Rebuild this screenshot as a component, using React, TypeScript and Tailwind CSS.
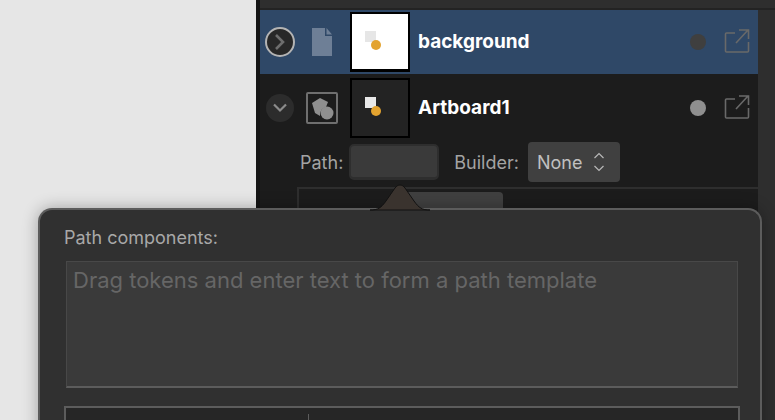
const ui = "font-['Inter','Liberation_Sans',sans-serif]";

function Thumb({ dark }: { dark?: boolean }) {
  return (
    <div className={`w-[60px] h-[60px] shrink-0 border-2 border-black ${dark ? 'bg-[#232323]' : 'bg-white border-b-[3px]'} flex items-center justify-center`}>
      <svg width="56" height="56" viewBox="0 0 56 56">
        <rect x="13" y="17" width="11" height="11" fill={dark ? '#e8e8e8' : '#e6e6e6'} />
        <circle cx="24" cy="31" r="5" fill="#e3a32f" />
      </svg>
    </div>
  );
}

function ShareIcon() {
  return (
    <svg width="26" height="26" viewBox="0 0 26 26" fill="none" stroke="#696969" strokeWidth="1.6" className="shrink-0">
      <path d="M11 5H2.5a1 1 0 0 0-1 1v17a1 1 0 0 0 1 1h21a1 1 0 0 0 1-1v-9" />
      <path d="M12 15 24 2M15 2h9.5v9" />
    </svg>
  );
}

export default function App() {
  return (
    <div className={`w-[775px] h-[420px] relative overflow-hidden flex bg-[#e6e6e6] ${ui}`}>
      <div className="w-[256px] shrink-0" />
      <div className="flex-1 flex flex-col bg-[#2e2e2e] border-l-4 border-[#141414]">
        <div className="h-[10px] shrink-0 border-b-2 border-[#232323]" />
        <div className="w-[498px] flex-1 flex flex-col bg-[#1c1c1c]">
          {/* Layer rows */}
          <div className="h-[64px] flex items-center bg-[#2f4867]">
            <div className="ml-[5px] w-[30px] h-[30px] rounded-full bg-[#282828] border-2 border-[#b4b4b4] flex items-center justify-center">
              <svg width="14" height="18" viewBox="0 0 14 18" fill="none" stroke="#6e6e6e" strokeWidth="2.6"><path d="M3 2l7 7-7 7" /></svg>
            </div>
            <svg width="20" height="28" viewBox="0 0 20 28" className="ml-[17px]" fill="#6e7f96">
              <path d="M0 0h13v8h7v20H0z" />
              <path d="M14.500 0 20 6.500h-5.500z" />
            </svg>
            <div className="ml-[18px]"><Thumb /></div>
            <span className="ml-[8px] text-[19px] font-bold text-white">background</span>
            <div className="ml-auto w-[16px] h-[16px] rounded-full bg-[#3f3f3f]" />
            <div className="ml-[18px] mr-[8px] -mt-[3px]"><ShareIcon /></div>
          </div>
          <div className="h-[68px] flex items-center">
            <div className="ml-[6px] w-[28px] h-[28px] rounded-full bg-[#2c2c2c] flex items-center justify-center">
              <svg width="16" height="10" viewBox="0 0 16 10" fill="none" stroke="#8b8b8b" strokeWidth="2.2"><path d="M2 1.500l6 6 6-6" /></svg>
            </div>
            <div className="ml-[12px] w-[32px] h-[32px] border-2 border-[#6f6f6f] rounded-[2px] flex items-center justify-center">
              <svg width="26" height="26" viewBox="0 0 26 26" fill="#8f8f8f">
                <path d="M3 8 11 3l8 4-2 5a8 8 0 0 0-6 9L6 18z" />
                <circle cx="18" cy="18" r="6.500" />
              </svg>
            </div>
            <div className="ml-[12px]"><Thumb dark /></div>
            <span className="ml-[8px] text-[19px] font-bold text-white">Artboard1</span>
            <div className="ml-auto w-[16px] h-[16px] rounded-full bg-[#8f8f8f]" />
            <div className="ml-[18px] mr-[8px] -mt-[3px]"><ShareIcon /></div>
          </div>
          {/* Path and builder */}
          <div className="flex items-center ml-[40px] h-[40px] text-[18px] text-[#a3a3a3]">
            <span>Path:</span>
            <div className="ml-[6px] w-[90px] h-[36px] rounded-[5px] bg-[#3a3a3a] border-[2px] border-[#2e2e2e] border-b-[3px]" />
            <span className="ml-[15px]">Builder:</span>
            <div className="ml-[9px] w-[92px] h-[40px] rounded-[4px] bg-[#404040] flex items-center pl-[9px] text-[#c0c0c0]">
              None
              <svg width="12" height="24" viewBox="0 0 12 24" fill="none" stroke="#b8b8b8" strokeWidth="1.2" className="ml-[11px]"><path d="M1.500 8 6 3.500 10.500 8M1.500 16 6 20.500 10.500 16" /></svg>
            </div>
          </div>
          <div className="flex-1 ml-[37px] mt-[5px] border-l-2 border-t-2 border-[#2e2e2e] pl-[101px] pt-[3px]">
            <div className="w-[103px] h-[30px] rounded-[4px] bg-[#404040]" />
          </div>
        </div>
      </div>

      {/* Path template popover */}
      <div className="absolute left-[38px] top-[208px] w-[724px] h-[260px] rounded-t-[14px] bg-[#303030] border-2 border-[#5c5c5c] border-b-0 shadow-[0_0_16px_rgba(0,0,0,0.3)] pl-[24px] pr-[24px] pt-[16px]">
        <svg width="60" height="28" viewBox="0 0 60 28" className="absolute left-[330px] -top-[27px]">
          <path d="M0 27c8 0 11-2 16-9l9-13c3-4 7-4 10 0l9 13c5 7 8 9 16 9z" fill="#3a332e" stroke="#111111" strokeWidth="1" />
        </svg>
        <p className="text-[18px] leading-[24px] text-[#a8a8a8]">Path components:</p>
        <div className="mt-[11px] ml-[2px] w-[672px] h-[127px] bg-[#3a3a3a] border border-[#484848] border-b-2 border-b-[#5c5c5c] pl-[6px] pt-[2px] text-[22px] leading-[32px] text-[#666666]">
          Drag tokens and enter text to form a path template
        </div>
        <div className="mt-[18px] w-[676px] h-[40px] bg-[#262626] border-2 border-[#5c5c5c] border-b-0 pl-[242px] pt-[6px]">
          <div className="w-px h-[10px] bg-[#5c5c5c]" />
        </div>
      </div>
    </div>
  );
}
